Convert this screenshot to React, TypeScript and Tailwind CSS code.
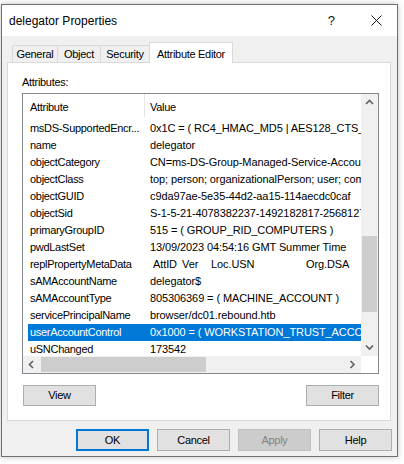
import React from 'react';

type Row = { name: string; value: React.ReactNode };

const rows: Row[] = [
  { name: 'msDS-SupportedEncr...', value: '0x1C = ( RC4_HMAC_MD5 | AES128_CTS_HMAC_SHA1_96 | AES256_CTS_HMAC_SHA1_96 )' },
  { name: 'name', value: 'delegator' },
  { name: 'objectCategory', value: 'CN=ms-DS-Group-Managed-Service-Account,CN=Schema,CN=Configuration,DC=rebound,DC=htb' },
  { name: 'objectClass', value: 'top; person; organizationalPerson; user; computer; msDS-GroupManagedServiceAccount' },
  { name: 'objectGUID', value: 'c9da97ae-5e35-44d2-aa15-114aecdc0caf' },
  { name: 'objectSid', value: 'S-1-5-21-4078382237-1492182817-2568127209-7686' },
  { name: 'primaryGroupID', value: '515 = ( GROUP_RID_COMPUTERS )' },
  { name: 'pwdLastSet', value: '13/09/2023 04:54:16 GMT Summer Time' },
  {
    name: 'replPropertyMetaData',
    value: (
      <span className="flex pl-[3px]">
        <span className="w-[29px] shrink-0">AttID</span>
        <span className="w-[29px] shrink-0">Ver</span>
        <span className="w-[95px] shrink-0">Loc.USN</span>
        <span className="shrink-0">Org.DSA</span>
      </span>
    ),
  },
  { name: 'sAMAccountName', value: 'delegator$' },
  { name: 'sAMAccountType', value: '805306369 = ( MACHINE_ACCOUNT )' },
  { name: 'servicePrincipalName', value: 'browser/dc01.rebound.htb' },
  { name: 'userAccountControl', value: '0x1000 = ( WORKSTATION_TRUST_ACCOUNT )' },
  { name: 'uSNChanged', value: '173542' },
];

const Chevron = ({ dir }: { dir: 'up' | 'down' | 'left' | 'right' }) => {
  const d = {
    up: 'M1 5 L4.5 1.5 L8 5',
    down: 'M1 1.5 L4.5 5 L8 1.5',
    left: 'M5 1 L1.5 4.5 L5 8',
    right: 'M1.5 1 L5 4.5 L1.5 8',
  }[dir];
  const horiz = dir === 'left' || dir === 'right';
  return (
    <svg width={horiz ? 7 : 9} height={horiz ? 9 : 7} viewBox={horiz ? '0 0 7 9' : '0 0 9 7'}>
      <path d={d} fill="none" stroke="#606060" strokeWidth="1.6" />
    </svg>
  );
};

const Button = ({
  label,
  width = 'w-[73px]',
  height = 'h-[22px]',
  variant = 'normal',
}: {
  label: string;
  width?: string;
  height?: string;
  variant?: 'normal' | 'default' | 'disabled';
}) => (
  <div
    className={`${width} ${height} flex items-center justify-center ${
      variant === 'default'
        ? 'border-2 border-[#0078d7] bg-[#e1e1e1] text-black'
        : variant === 'disabled'
          ? 'border border-[#bfbfbf] bg-[#cccccc] text-[#838383]'
          : 'border border-[#adadad] bg-[#e1e1e1] text-black'
    }`}
  >
    {label}
  </div>
);

const tabs = [
  { label: 'General', w: 'w-[46px]' },
  { label: 'Object', w: 'w-[44px]' },
  { label: 'Security', w: 'w-[50px]' },
];

export default function App() {
  return (
    <div
      className="w-[404px] h-[464px] overflow-hidden bg-white pt-[4px] pl-[1px] text-[11px] tracking-[-0.3px] text-black"
      style={{ fontFamily: '"Liberation Sans", Arial, sans-serif' }}
    >
      <div className="w-[397px] h-[453px] border border-[#707070] flex flex-col bg-[#f0f0f0] shadow-[0_0_6px_rgba(0,0,0,0.25)]">
        {/* title bar */}
        <div className="h-[31px] shrink-0 bg-white flex items-center">
          <span className="pl-[7px] text-[12px] tracking-normal">delegator Properties</span>
          <span className="ml-auto mr-[36px] text-[13px] tracking-normal text-[#111]">?</span>
          <svg className="mr-[15px]" width="11" height="11" viewBox="0 0 11 11">
            <path d="M0.5 0.5 L10.5 10.5 M10.5 0.5 L0.5 10.5" stroke="#111" strokeWidth="1" />
          </svg>
        </div>

        {/* body */}
        <div className="flex-1 flex flex-col pt-[6px]">
          <div className="h-[20px] flex items-end pl-[10px] relative z-10">
            {tabs.map((t, i) => (
              <div
                key={t.label}
                className={`${t.w} h-[17px] border border-b-0 border-[#d9d9d9] bg-[#f0f0f0] flex items-center justify-center ${
                  i > 0 ? 'ml-[-1px]' : ''
                }`}
              >
                {t.label}
              </div>
            ))}
            <div className="w-[84px] h-[21px] ml-[-1px] mb-[-1px] border border-b-0 border-[#d9d9d9] bg-white flex items-start justify-center pt-[3px]">
              Attribute Editor
            </div>
          </div>

          <div className="ml-[5px] w-[384px] h-[359px] border border-[#d9d9d9] bg-white flex flex-col">
            <div className="pl-[14px] pt-[13px] leading-[13px]">Attributes:</div>

            {/* list view */}
            <div className="ml-[14px] mt-[4px] w-[357px] h-[281px] border border-[#828790] flex flex-col">
              <div className="flex h-[262px]">
                <div className="w-[338px] overflow-hidden flex flex-col">
                  <div className="h-[26px] shrink-0 flex items-center">
                    <div className="w-[121px] pl-[7px]">Attribute</div>
                    <div className="w-[1px] h-[23px] self-start bg-[#e5e5e5]" />
                    <div className="pl-[5px]">Value</div>
                  </div>
                  {rows.map((r) => {
                    const sel = r.name === 'userAccountControl';
                    return (
                      <div
                        key={r.name}
                        className={`ml-[5px] h-[17px] shrink-0 flex items-center whitespace-nowrap ${
                          sel ? 'bg-[#0078d7] text-white' : ''
                        }`}
                      >
                        <div className="w-[116px] shrink-0 pl-[2px] overflow-hidden">{r.name}</div>
                        <div className="pl-[6px] flex-1 overflow-hidden tracking-[-0.1px]">{r.value}</div>
                      </div>
                    );
                  })}
                </div>
                {/* vertical scrollbar */}
                <div className="w-[17px] bg-[#f0f0f0] flex flex-col">
                  <div className="h-[17px] flex items-center justify-center">
                    <Chevron dir="up" />
                  </div>
                  <div className="flex-1 flex flex-col">
                    <div className="h-[125px]" />
                    <div className="h-[76px] mx-[1px] bg-[#cdcdcd]" />
                  </div>
                  <div className="h-[17px] flex items-center justify-center">
                    <Chevron dir="down" />
                  </div>
                </div>
              </div>
              {/* horizontal scrollbar */}
              <div className="flex h-[17px]">
                <div className="w-[338px] bg-[#f0f0f0] flex items-center">
                  <div className="w-[17px] h-full flex items-center justify-center">
                    <Chevron dir="left" />
                  </div>
                  <div className="flex-1 h-full flex items-center">
                    <div className="ml-[1px] w-[165px] h-[15px] bg-[#cdcdcd]" />
                  </div>
                  <div className="w-[17px] h-full flex items-center justify-center">
                    <Chevron dir="right" />
                  </div>
                </div>
                <div className="w-[17px] bg-white" />
              </div>
            </div>

            <div className="mt-[11px] ml-[15px] w-[356px] flex justify-between">
              <Button label="View" height="h-[21px]" />
              <Button label="Filter" height="h-[21px]" />
            </div>
          </div>

          <div className="mt-[8px] pr-[5px] flex justify-end gap-[8px]">
            <Button label="OK" variant="default" />
            <Button label="Cancel" />
            <Button label="Apply" variant="disabled" />
            <Button label="Help" />
          </div>
        </div>
      </div>
    </div>
  );
}
